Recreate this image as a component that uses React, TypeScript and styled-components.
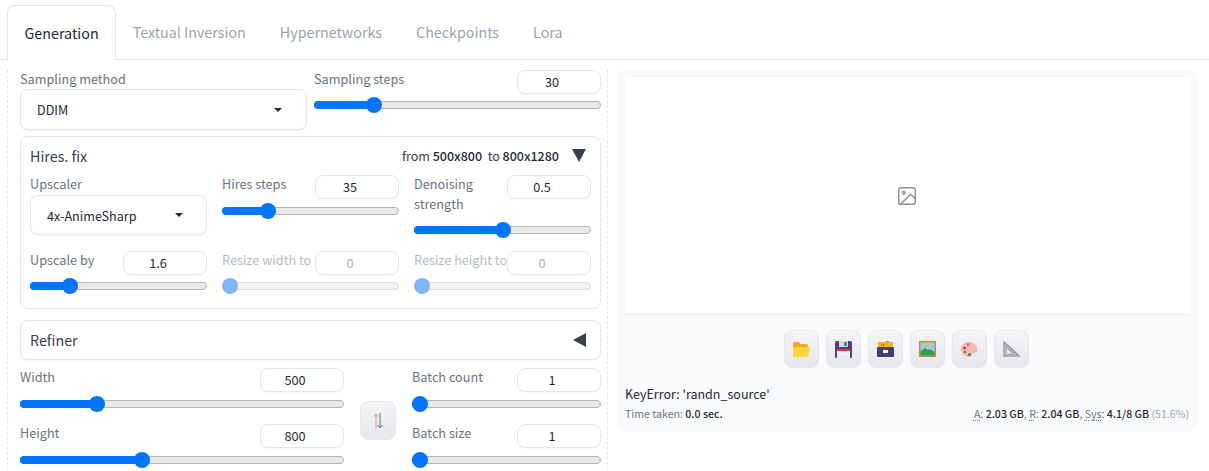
import React from "react";
import styled, { createGlobalStyle } from "styled-components";

const GlobalStyle = createGlobalStyle`
  html, body {
    margin: 0;
    padding: 0;
    background: #ffffff;
    overflow: hidden;
  }
  body {
    width: 1209px;
    height: 471px;
    font-family: "Noto Sans CJK JP", "Noto Sans", sans-serif;
    color: #374151;
  }
  * { box-sizing: border-box; }
`;

const Page = styled.div`
  width: 1209px;
  height: 471px;
  overflow: hidden;
  padding-top: 5px;
`;

const TabBar = styled.div`
  display: flex;
  height: 55px;
  border-bottom: 1px solid #e5e7eb;
  padding-left: 7px;
`;

const Tab = styled.div<{ $active?: boolean }>`
  height: ${(p) => (p.$active ? "55px" : "54px")};
  padding: ${(p) => (p.$active ? "0 16px 1px 16.5px" : "0 17px 1px")};
  display: flex;
  align-items: center;
  font-size: 14.3px;
  line-height: 24px;
  color: ${(p) => (p.$active ? "#1f2937" : "#9ca3af")};
  background: #fff;
  ${(p) =>
    p.$active
      ? `border: 1px solid #e5e7eb; border-bottom: none; border-radius: 8px 8px 0 0;`
      : ""}
`;

const Panel = styled.div`
  display: flex;
  padding: 10px 12px 0 7px;
  gap: 9px;
`;

const LeftColumn = styled.div`
  width: 601px;
  height: 420px;
  border-left: 1px dashed #e5e7eb;
  border-right: 1px dashed #e5e7eb;
  padding: 0 6px 0 12px;
  display: flex;
  flex-direction: column;
`;

const TopRow = styled.div`
  display: flex;
  gap: 7px;
`;

const Label = styled.div<{ $disabled?: boolean }>`
  font-size: 12.7px;
  line-height: 18px;
  color: ${(p) => (p.$disabled ? "#b7bcc4" : "#6b7280")};
  white-space: nowrap;
`;

const WrappedLabel = styled(Label)`
  line-height: 20px;
  margin-top: -1px;
`;

const SelectBlock = styled.div<{ $width: number }>`
  width: ${(p) => p.$width}px;
  flex: none;
  display: flex;
  flex-direction: column;
`;

const SelectBox = styled.div<{ $height: number; $pad: number; $top: number }>`
  margin-top: ${(p) => p.$top}px;
  height: ${(p) => p.$height}px;
  border: 1px solid #e5e7eb;
  border-radius: 8px;
  box-shadow: 0 1px 2px rgba(0, 0, 0, 0.05);
  background: #fff;
  padding: 0 ${(p) => p.$pad}px 0 16px;
  display: flex;
  align-items: center;
  justify-content: space-between;
  font-size: 12.6px;
  color: #1f2937;
`;

const Caret = styled.span`
  width: 0;
  height: 0;
  border-left: 4px solid transparent;
  border-right: 4px solid transparent;
  border-top: 4px solid #1f2937;
`;

const SliderBlock = styled.div`
  display: flex;
  flex-direction: column;
  flex: 1;
  min-width: 0;
`;

const SliderHead = styled.div<{ $height?: number }>`
  display: flex;
  justify-content: space-between;
  align-items: flex-start;
  height: ${(p) => p.$height ?? 24}px;
`;

const NumberBox = styled.div<{ $disabled?: boolean }>`
  width: 84px;
  height: 24px;
  flex: none;
  border: 1px solid #e5e7eb;
  border-radius: 8px;
  background: #fff;
  font-size: 12.7px;
  line-height: 22px;
  padding-right: 14px;
  text-align: center;
  color: ${(p) => (p.$disabled ? "#a9b0ba" : "#1f2937")};
  box-shadow: 0 1px 1px rgba(0, 0, 0, 0.03);
`;

const Track = styled.div<{ $disabled?: boolean; $gap?: number }>`
  position: relative;
  height: 8px;
  margin-top: ${(p) => p.$gap ?? 7}px;
  border-radius: 4px;
  background: ${(p) => (p.$disabled ? "#f3f3f3" : "#e9e9e9")};
  border: 1px solid ${(p) => (p.$disabled ? "#dcdcdc" : "#b5b5b5")};
`;

const Fill = styled.div`
  position: absolute;
  left: -1px;
  top: -1px;
  bottom: -1px;
  border-radius: 4px 0 0 4px;
  background: #0075ff;
`;

const Thumb = styled.div<{ $disabled?: boolean }>`
  position: absolute;
  top: 50%;
  width: 16px;
  height: 16px;
  margin: -8px 0 0 -8px;
  border-radius: 50%;
  background: ${(p) => (p.$disabled ? "#7fb6fb" : "#0075ff")};
`;

type SliderProps = {
  label: React.ReactNode;
  value: string;
  pos: number;
  gap?: number;
  disabled?: boolean;
};

const Slider = ({ label, value, pos, gap, disabled }: SliderProps) => (
  <SliderBlock>
    <SliderHead>
      <Label $disabled={disabled}>{label}</Label>
      <NumberBox $disabled={disabled}>{value}</NumberBox>
    </SliderHead>
    <Track $disabled={disabled} $gap={gap}>
      {!disabled && <Fill style={{ width: pos }} />}
      <Thumb $disabled={disabled} style={{ left: pos }} />
    </Track>
  </SliderBlock>
);

const HiresCard = styled.div`
  margin-top: 6px;
  height: 173px;
  border: 1px solid #e5e7eb;
  border-radius: 8px;
  padding: 7px 9px 0 9px;
`;

const HiresHead = styled.div`
  display: flex;
  justify-content: space-between;
  align-items: center;
  height: 24px;
`;

const CardTitle = styled.div`
  font-size: 14.3px;
  line-height: 24px;
  color: #374151;
`;

const Resolution = styled.div`
  display: flex;
  align-items: center;
  font-size: 12.5px;
  color: #374151;
  white-space: pre;
  padding: 0 5px 1px 0;
`;

const Strong = styled.b`
  font-weight: 500;
  color: #1f2937;
`;

const ArrowDown = styled.span`
  margin-left: 13px;
  width: 0;
  height: 0;
  border-left: 7px solid transparent;
  border-right: 7px solid transparent;
  border-top: 13px solid #374151;
`;

const ArrowLeft = styled.span`
  width: 0;
  height: 0;
  border-top: 7px solid transparent;
  border-bottom: 7px solid transparent;
  border-right: 13px solid #374151;
`;

const HiresRow = styled.div<{ $top: number; $height: number }>`
  display: grid;
  grid-template-columns: 177px 177px 177px;
  column-gap: 15px;
  margin-top: ${(p) => p.$top}px;
  height: ${(p) => p.$height}px;
`;

const RefinerCard = styled.div`
  margin-top: 11px;
  height: 40px;
  flex: none;
  border: 1px solid #e5e7eb;
  border-radius: 8px;
  box-shadow: 0 1px 2px rgba(0, 0, 0, 0.04);
  padding: 0 14px 0 9px;
  display: flex;
  align-items: center;
  justify-content: space-between;
`;

const SizeGrid = styled.div`
  margin-top: 8px;
  display: grid;
  grid-template-columns: 324px 68px 189px;
`;

const SizeColumn = styled.div`
  display: flex;
  flex-direction: column;
  gap: 16px;
`;

const SwapColumn = styled.div`
  display: flex;
  justify-content: center;
  padding-top: 33px;
`;

const SwapButton = styled.div`
  width: 36px;
  height: 39px;
  border-radius: 8px;
  border: 1px solid #e5e7eb;
  background: linear-gradient(to bottom, #f3f4f6, #e5e7eb);
  display: flex;
  align-items: center;
  justify-content: center;
`;

const RightColumn = styled.div`
  width: 580px;
  height: 362px;
  background: #f9fafb;
  border-radius: 8px;
  padding: 8px;
  display: flex;
  flex-direction: column;
`;

const Gallery = styled.div`
  height: 237px;
  background: #fff;
  display: flex;
  align-items: center;
  justify-content: center;
  border-bottom: 1px solid #eceef1;
`;

const ToolRow = styled.div`
  display: flex;
  justify-content: center;
  gap: 7px;
  margin-top: 15px;
  padding-right: 2px;
`;

const ToolButton = styled.div`
  width: 35px;
  height: 38px;
  border-radius: 8px;
  border: 1px solid #e5e7eb;
  background: linear-gradient(to bottom, #f3f4f6, #e5e7eb);
  display: flex;
  align-items: center;
  justify-content: center;
`;

const ErrorText = styled.div`
  margin-top: 16px;
  font-size: 12.5px;
  line-height: 20px;
  color: #1f2937;
`;

const InfoRow = styled.div`
  display: flex;
  justify-content: space-between;
  font-size: 10.6px;
  line-height: 16px;
  margin-top: 2px;
  color: #6b7280;
`;

const Abbr = styled.span`
  text-decoration: underline dotted;
  text-underline-offset: 2px;
`;

const Muted = styled.span`
  color: #9ca3af;
`;

const App = () => (
  <Page>
    <GlobalStyle />
    <TabBar>
      <Tab $active>Generation</Tab>
      <Tab>Textual Inversion</Tab>
      <Tab>Hypernetworks</Tab>
      <Tab>Checkpoints</Tab>
      <Tab>Lora</Tab>
    </TabBar>
    <Panel>
      <LeftColumn>
        <TopRow>
          <SelectBlock $width={287}>
            <Label>Sampling method</Label>
            <SelectBox $height={41} $pad={24} $top={1}>
              DDIM
              <Caret />
            </SelectBox>
          </SelectBlock>
          <Slider label="Sampling steps" value="30" pos={59} />
        </TopRow>
        <HiresCard>
          <HiresHead>
            <CardTitle>Hires. fix</CardTitle>
            <Resolution>
              from <Strong>500x800</Strong>  to <Strong>800x1280</Strong>
              <ArrowDown />
            </Resolution>
          </HiresHead>
          <HiresRow $top={7} $height={73}>
            <SelectBlock $width={177}>
              <Label>Upscaler</Label>
              <SelectBox $height={40} $pad={23} $top={2}>
                4x-AnimeSharp
                <Caret />
              </SelectBox>
            </SelectBlock>
            <Slider label="Hires steps" value="35" pos={45} gap={8} />
            <SliderBlock>
              <SliderHead $height={44}>
                <WrappedLabel>
                  Denoising
                  <br />
                  strength
                </WrappedLabel>
                <NumberBox>0.5</NumberBox>
              </SliderHead>
              <Track>
                <Fill style={{ width: 88 }} />
                <Thumb style={{ left: 88 }} />
              </Track>
            </SliderBlock>
          </HiresRow>
          <HiresRow $top={3} $height={50}>
            <Slider label="Upscale by" value="1.6" pos={39} />
            <Slider label="Resize width to" value="0" pos={7} disabled />
            <Slider label="Resize height to" value="0" pos={7} disabled />
          </HiresRow>
        </HiresCard>
        <RefinerCard>
          <CardTitle>Refiner</CardTitle>
          <ArrowLeft />
        </RefinerCard>
        <SizeGrid>
          <SizeColumn>
            <Slider label="Width" value="500" pos={76} gap={8} />
            <Slider label="Height" value="800" pos={121} gap={8} />
          </SizeColumn>
          <SwapColumn>
            <SwapButton>
              <svg width="10" height="16" viewBox="0 0 10 16" fill="none" strokeWidth="1">
                <path d="M3 16V1M0.500 4L3 1l2.500 3" stroke="#d9a27c" />
                <path d="M7 0v15M4.500 12L7 15l2.500-3" stroke="#6b7280" />
              </svg>
            </SwapButton>
          </SwapColumn>
          <SizeColumn>
            <Slider label="Batch count" value="1" pos={7} gap={8} />
            <Slider label="Batch size" value="1" pos={7} gap={8} />
          </SizeColumn>
        </SizeGrid>
      </LeftColumn>
      <RightColumn>
        <Gallery>
          <svg
            width="22"
            height="22"
            viewBox="0 0 24 24"
            fill="none"
            stroke="#8b8f97"
            strokeWidth="1.6"
            strokeLinecap="round"
            strokeLinejoin="round"
          >
            <rect x="3" y="3" width="18" height="18" rx="2" />
            <circle cx="8.5" cy="8.5" r="1.5" />
            <path d="M21 15l-5-5L5 21" />
          </svg>
        </Gallery>
        <ToolRow>
          <ToolButton>
            <svg width="17" height="15" viewBox="0 0 17 15">
              <path d="M0 1.500Q0 0 1.500 0h4l2 2h6q1.500 0 1.500 1.500V6H0z" fill="#f5a623" />
              <path d="M0 15V6q0-1 1-1h15q1 0 1 1l-2 9z" fill="#fdd835" />
            </svg>
          </ToolButton>
          <ToolButton>
            <svg width="17" height="17" viewBox="0 0 17 17">
              <rect width="17" height="17" rx="1.500" fill="#4c4180" />
              <rect x="4" y="0" width="9" height="6" fill="#d8d8e0" />
              <rect x="9.500" y="1" width="2" height="4" fill="#4c4180" />
              <rect x="2" y="8" width="13" height="9" fill="#ececf2" />
              <rect x="2" y="8" width="13" height="2" fill="#e8344a" />
            </svg>
          </ToolButton>
          <ToolButton>
            <svg width="17" height="16" viewBox="0 0 17 16">
              <rect x="9" y="0" width="3" height="2" fill="#2ecc71" />
              <rect x="1" y="1" width="15" height="6" fill="#f5b21e" />
              <rect x="4" y="3" width="4" height="2" fill="#e67e22" />
              <rect x="0" y="6" width="17" height="10" rx="1" fill="#453a7c" />
              <rect x="6" y="9" width="5" height="3" fill="#f4f4f4" />
            </svg>
          </ToolButton>
          <ToolButton>
            <svg width="17" height="16" viewBox="0 0 17 16">
              <rect width="17" height="16" fill="#c98a3c" />
              <rect x="1.500" y="1.500" width="14" height="13" fill="#8fd0ee" />
              <circle cx="8.500" cy="5" r="2" fill="#f6b73c" />
              <path d="M1.500 10L6 7l3 2 2-1 4.500 3v3.500h-14z" fill="#2e9e4f" />
            </svg>
          </ToolButton>
          <ToolButton>
            <svg width="17" height="15" viewBox="0 0 17 15">
              <path
                d="M8 0C3.500 0 0 3.500 0 7.500S4 15 8.500 15c2.500 0 2-2 2.500-3s3.500 0 5-2.500C17 4 13 0 8 0z"
                fill="#f6b6ac"
              />
              <circle cx="7" cy="2.500" r="1.300" fill="#9c6bc9" />
              <circle cx="3.500" cy="6" r="1.300" fill="#d81b60" />
              <circle cx="4" cy="10" r="1.300" fill="#2eaa4f" />
              <circle cx="8.500" cy="12.500" r="1.500" fill="#3f6fe0" />
            </svg>
          </ToolButton>
          <ToolButton>
            <svg width="17" height="16" viewBox="0 0 17 16">
              <path d="M0 0L17 15v1H0zM4 8v4.500h5z" fill="#b0b0b4" fillRule="evenodd" />
              <path d="M1 0.500L16.500 15" stroke="#8c7fb0" strokeWidth="1" />
            </svg>
          </ToolButton>
        </ToolRow>
        <ErrorText>KeyError: 'randn_source'</ErrorText>
        <InfoRow>
          <span>
            Time taken: <Strong>0.0 sec.</Strong>
          </span>
          <span>
            <Abbr>A</Abbr>: <Strong>2.03 GB</Strong>, <Abbr>R</Abbr>: <Strong>2.04 GB</Strong>,{" "}
            <Abbr>Sys</Abbr>: <Strong>4.1/8 GB</Strong> <Muted>(51.6%)</Muted>
          </span>
        </InfoRow>
      </RightColumn>
    </Panel>
  </Page>
);

export default App;
